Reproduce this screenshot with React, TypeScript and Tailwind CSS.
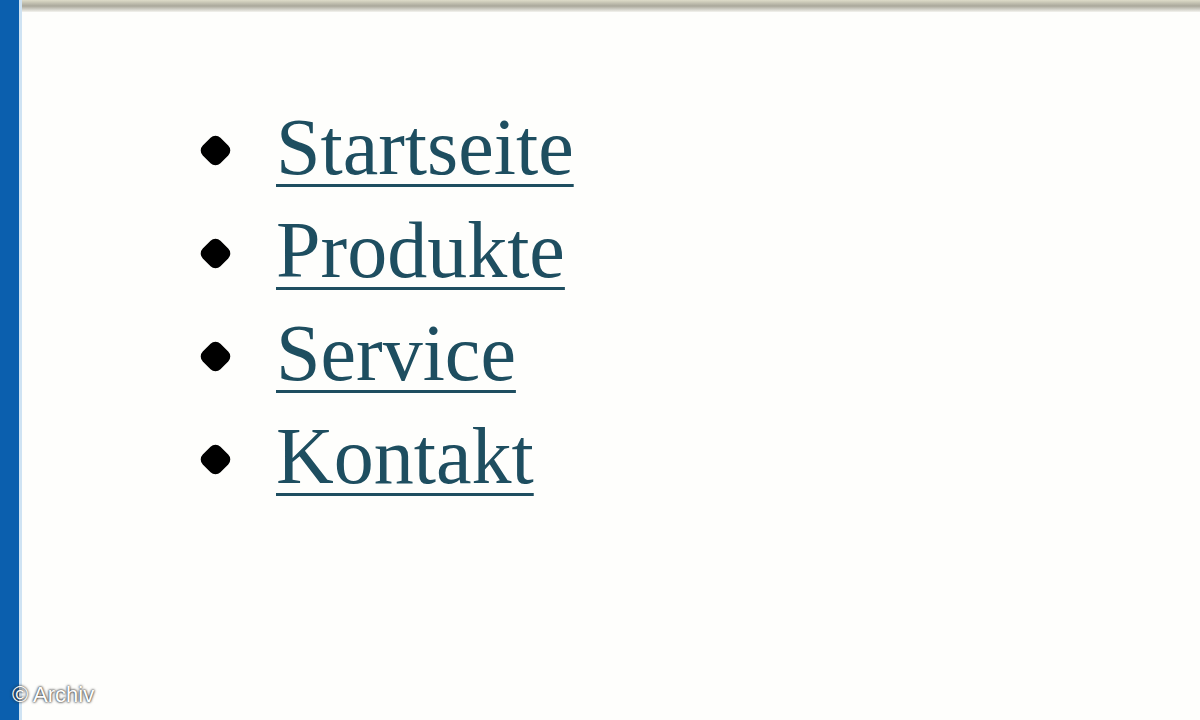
import React from 'react';

const links = ['Startseite', 'Produkte', 'Service', 'Kontakt'];

export default function App() {
  return (
    <div className="relative flex h-[720px] w-[1200px] overflow-hidden bg-[#fefefc]">
      {/* left window edge */}
      <div className="flex h-full w-[22px] shrink-0">
        <div className="h-full w-[19px] bg-[#0b5fae]" />
        <div className="h-full w-[3px] bg-[#cfe3f3]" />
      </div>

      <div className="flex flex-1 flex-col">
        {/* top edge */}
        <div className="h-[12px] w-full bg-gradient-to-b from-[#dedcc9] via-[#aaa89b] to-[#f3f3ee]" />

        <ul className="ml-[180px] mt-[84px] flex flex-col font-['Liberation_Serif',serif] text-[80px] leading-[103px] text-[#1e4e60]">
          {links.map((l) => (
            <li key={l} className="flex items-center">
              <span className="ml-[1px] mr-[48px] mt-[6px] h-[25px] w-[25px] shrink-0 rotate-45 rounded-[7px] bg-black" />
              <a
                href="#"
                className="underline decoration-[3px] underline-offset-[10px]"
              >
                {l}
              </a>
            </li>
          ))}
        </ul>
      </div>

      <span className="absolute bottom-[9px] left-[12px] font-['Liberation_Sans',Arial,sans-serif] text-[22px] text-white [text-shadow:0_0_3px_#333,0_0_2px_#333]">
        © Archiv
      </span>
    </div>
  );
}
